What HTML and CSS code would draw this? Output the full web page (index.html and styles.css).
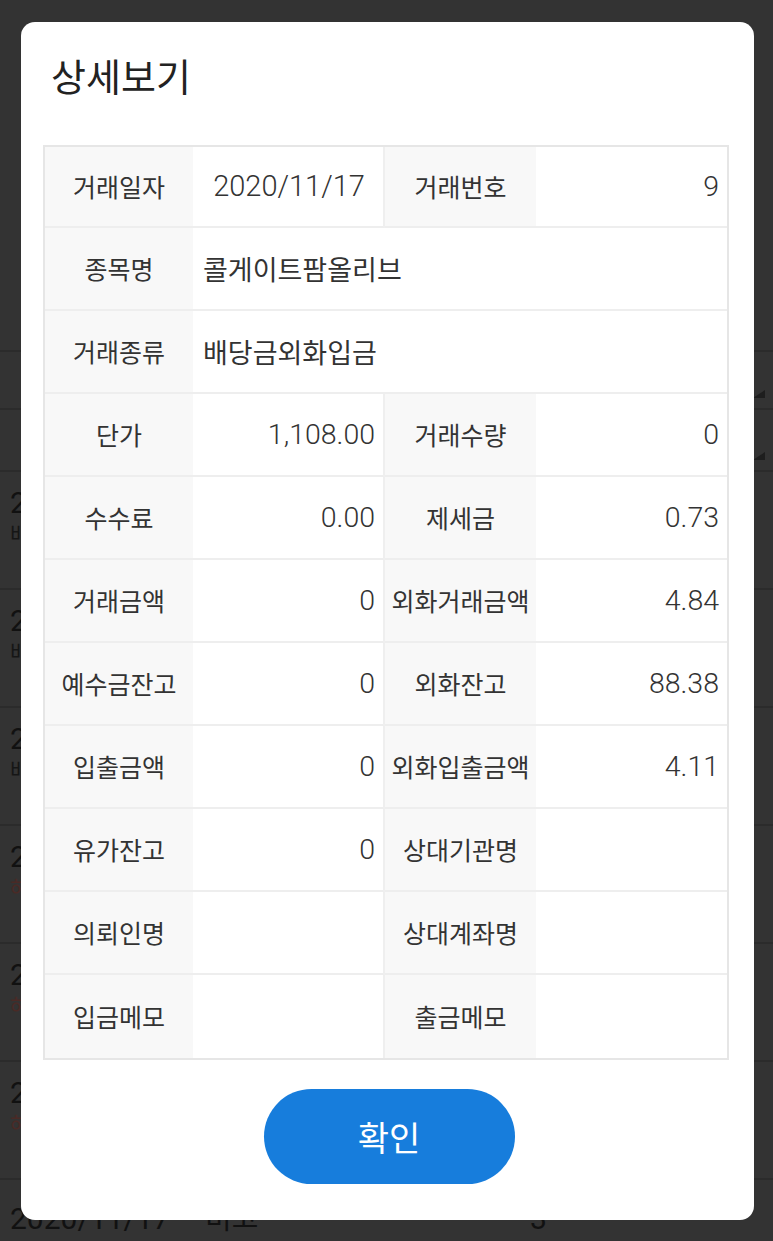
FILE: index.html
```html
<!DOCTYPE html>
<html lang="ko">
<head>
    <meta charset="UTF-8">
    <meta name="viewport" content="width=device-width, initial-scale=1.0">
    <title>거래내역</title>
    <link rel="stylesheet" href="styles.css">
</head>
<body>
    <!-- list page behind the dialog (already dimmed) -->
    <div class="page">
        <div class="page-head"></div>
        <div class="filter-row"><span class="arrow"></span></div>
        <div class="filter-row tall"><span class="arrow"></span></div>
        <ul class="trade-list">
            <li class="trade">
                <div class="trade-main"><span class="date">2020/11/17</span></div>
                <div class="trade-sub">배당금외화입금</div>
            </li>
            <li class="trade">
                <div class="trade-main"><span class="date">2020/11/17</span></div>
                <div class="trade-sub">배당금입금</div>
            </li>
            <li class="trade">
                <div class="trade-main"><span class="date">2020/11/17</span></div>
                <div class="trade-sub">배당금입금</div>
            </li>
            <li class="trade">
                <div class="trade-main"><span class="date">2020/11/16</span></div>
                <div class="trade-sub sell">해외주식매수</div>
            </li>
            <li class="trade">
                <div class="trade-main"><span class="date">2020/11/16</span></div>
                <div class="trade-sub sell">해외주식매수</div>
            </li>
            <li class="trade">
                <div class="trade-main"><span class="date">2020/11/16</span></div>
                <div class="trade-sub sell">해외주식매수</div>
            </li>
            <li class="trade last">
                <div class="trade-main"><span class="date">2020/11/17</span><span class="kind">비고</span><span class="qty">3</span></div>
            </li>
        </ul>
    </div>

    <div class="overlay">
        <div class="modal">
            <h1 class="modal-title">상세보기</h1>
            <div class="detail">
                <div class="label">거래일자</div>
                <div class="value center split">2020/11/17</div>
                <div class="label">거래번호</div>
                <div class="value num">9</div>

                <div class="label">종목명</div>
                <div class="value wide">콜게이트팜올리브</div>

                <div class="label">거래종류</div>
                <div class="value wide">배당금외화입금</div>

                <div class="label">단가</div>
                <div class="value num split">1,108.00</div>
                <div class="label">거래수량</div>
                <div class="value num">0</div>

                <div class="label">수수료</div>
                <div class="value num split">0.00</div>
                <div class="label">제세금</div>
                <div class="value num">0.73</div>

                <div class="label">거래금액</div>
                <div class="value num split">0</div>
                <div class="label">외화거래금액</div>
                <div class="value num">4.84</div>

                <div class="label">예수금잔고</div>
                <div class="value num split">0</div>
                <div class="label">외화잔고</div>
                <div class="value num">88.38</div>

                <div class="label">입출금액</div>
                <div class="value num split">0</div>
                <div class="label">외화입출금액</div>
                <div class="value num">4.11</div>

                <div class="label">유가잔고</div>
                <div class="value num split">0</div>
                <div class="label">상대기관명</div>
                <div class="value"></div>

                <div class="label">의뢰인명</div>
                <div class="value split"></div>
                <div class="label">상대계좌명</div>
                <div class="value"></div>

                <div class="label">입금메모</div>
                <div class="value split"></div>
                <div class="label">출금메모</div>
                <div class="value"></div>
            </div>
            <div class="modal-actions">
                <button class="confirm-btn">확인</button>
            </div>
        </div>
    </div>
</body>
</html>
```

FILE: styles.css
```css
body {
    margin: 0;
    height: 1241px;
    overflow: hidden;
    background-color: #333;
    font-family: Roboto, "Noto Sans CJK KR", sans-serif;
    color: #111;
}

/* dimmed list page */
.page-head {
    height: 350px;
    border-bottom: 2px solid #2b2b2b;
}
.filter-row {
    height: 56px;
    border-bottom: 2px solid #2b2b2b;
    position: relative;
}
.filter-row.tall {
    height: 60px;
}
.arrow {
    position: absolute;
    right: 8px;
    bottom: 10px;
    width: 0;
    height: 0;
    border-left: 12px solid transparent;
    border-bottom: 8px solid #1e1e1e;
}
.trade-list {
    list-style: none;
    margin: 0;
    padding: 0;
}
.trade {
    height: 118px;
    box-sizing: border-box;
    padding: 14px 0 0 10px;
    border-bottom: 2px solid #2b2b2b;
}
.trade.last {
    padding-top: 22px;
    border-bottom: none;
}
.trade-main {
    display: flex;
    font-size: 30px;
    line-height: 34px;
}
.trade-main .date {
    width: 195px;
}
.trade-main .kind {
    width: 325px;
    font-size: 29px;
}
.trade-sub {
    font-size: 22px;
    line-height: 30px;
    color: #161616;
}
.trade-sub.sell {
    color: #4a2a26;
}

/* dialog */
.overlay {
    position: fixed;
    top: 0;
    left: 0;
    right: 0;
    bottom: 0;
    display: flex;
    align-items: center;
    justify-content: center;
    padding-left: 2px;
}
.modal {
    width: 733px;
    box-sizing: border-box;
    padding: 35px 25px 36px 22px;
    background-color: #fff;
    border-radius: 14px;
}
.modal-title {
    margin: 0;
    padding-left: 8px;
    font-size: 38px;
    line-height: 42px;
    font-weight: 400;
    color: #222;
}
.detail {
    display: grid;
    grid-template-columns: 148px 192px 151px 1fr;
    margin-top: 46px;
    border: 2px solid #e6e6e6;
}
.detail > div {
    height: 83px;
    box-sizing: border-box;
    display: flex;
    align-items: center;
    border-bottom: 2px solid #eeeeee;
    color: #333;
    font-size: 27px;
}
.detail > div:nth-child(-n+4) {
    height: 81px;
}
.detail > div:nth-last-child(-n+4) {
    border-bottom: none;
}
.label {
    justify-content: center;
    background-color: #f8f8f8;
    font-size: 25px !important;
}
.value {
    padding: 0 8px 0 10px;
}
.value.wide {
    grid-column: span 3;
}
.value.num {
    justify-content: flex-end;
    font-size: 28.5px !important;
    font-weight: 300;
}
.value.center {
    justify-content: center;
    font-size: 29px !important;
    font-weight: 300;
}
.value.split {
    border-right: 2px solid #efefef;
}
.modal-actions {
    display: flex;
    justify-content: center;
    padding-left: 6px;
    margin-top: 29px;
}
.confirm-btn {
    width: 251px;
    height: 95px;
    border: none;
    border-radius: 48px;
    background-color: #177ddc;
    color: #fff;
    font-family: inherit;
    font-size: 34px;
    cursor: pointer;
}
```
